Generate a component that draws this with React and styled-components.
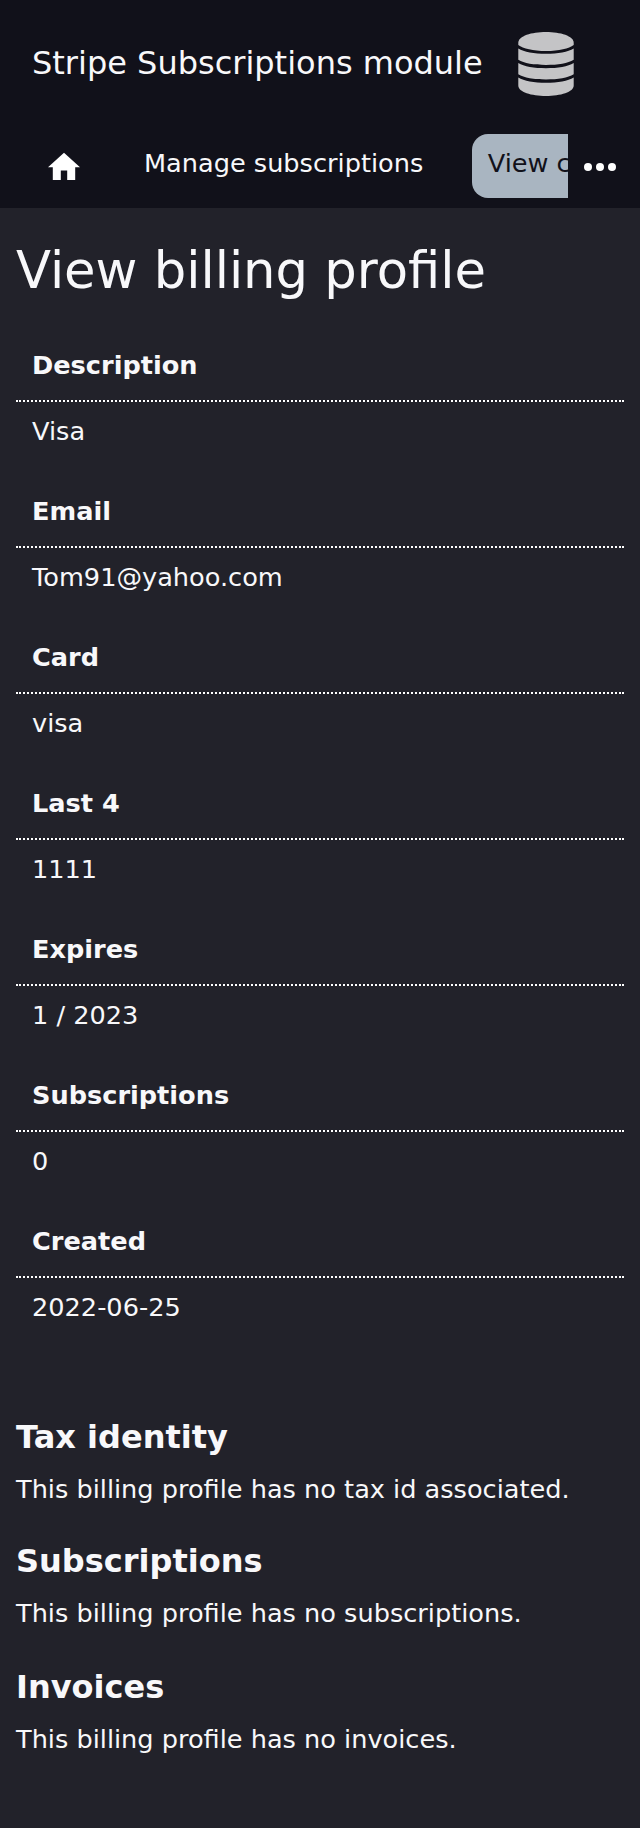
import React from "react";
import styled, { createGlobalStyle } from "styled-components";

const Global = createGlobalStyle`
  * { box-sizing: border-box; }
  body { margin: 0; background: #22222a; color: #f8f8fa; font-family: "DejaVu Sans", sans-serif; font-size: 25.6px; line-height: 36px; }
`;
const Page = styled.div`
  min-height: 1828px;
  background: #22222a;
`;
const Header = styled.header`
  height: 208px;
  background: #11111a;
`;
const Brand = styled.div`
  display: flex;
  align-items: center;
  height: 128px;
  padding-left: 32px;
`;
const BrandName = styled.div`
  width: 486px;
  padding-bottom: 2px;
  font-size: 32px;
  line-height: 48px;
  white-space: nowrap;
`;
const Nav = styled.nav`
  display: flex;
  height: 80px;
`;
const NavScroll = styled.div`
  display: flex;
  gap: 32px;
  width: 568px;
  overflow: hidden;
  padding: 6px 0 10px 32px;
`;
const NavItem = styled.a`
  flex: none;
  height: 64px;
  padding: 0 16px;
  line-height: 58px;
  border-radius: 16px;
  white-space: nowrap;
  margin-left: ${(p) => (p.$active ? "0.5px" : "0")};
  background: ${(p) => (p.$active ? "#a9b5c1" : "transparent")};
  color: ${(p) => (p.$active ? "#11111a" : "#f8f8fa")};
`;
const HomeIcon = styled.svg`
  display: block;
  width: 32px;
  height: 32px;
  margin-top: 14px;
  fill: #fff;
`;
const More = styled.div`
  width: 72px;
  padding: 34px 0 0 16px;
  line-height: 0;
`;
const Main = styled.main`
  padding: 0 16px;
`;
const Title = styled.h1`
  margin: 32px 0 29px;
  font-size: 51.2px;
  line-height: 60px;
  font-weight: 400;
`;
const Field = styled.div`
  height: 146px;
`;
const Label = styled.div`
  height: 73px;
  padding: 18px 16px 0;
  font-weight: 700;
  border-bottom: 2px dotted #fff;
`;
const Value = styled.div`
  padding: 11px 16px;
`;
const Sections = styled.div`
  display: grid;
  grid-template-rows: 124px 126px auto;
  margin-top: 62px;
`;
const SectionTitle = styled.h2`
  margin: 0;
  font-size: 32px;
  line-height: 48px;
`;
const Text = styled.p`
  margin: 10px 0 0;
`;

const fields = [
  ["Description", "Visa"],
  ["Email", "Tom91@yahoo.com"],
  ["Card", "visa"],
  ["Last 4", "1111"],
  ["Expires", "1 / 2023"],
  ["Subscriptions", "0"],
  ["Created", "2022-06-25"],
];
const sections = [
  ["Tax identity", "This billing profile has no tax id associated."],
  ["Subscriptions", "This billing profile has no subscriptions."],
  ["Invoices", "This billing profile has no invoices."],
];

export default function App() {
  return (
    <Page>
      <Global />
      <Header>
        <Brand>
          <BrandName>Stripe Subscriptions module</BrandName>
          <svg width="56" height="64" viewBox="0 0 56 64" fill="#c4c4c6">
            <path d="M28 0C42.5 0 55.7 4 55.7 10.8V13C51 16.6 41 19 28 19S5 16.6 0.3 13V10.8C0.3 4 13.5 0 28 0z" />
            <path d="M0.3 16.5C6 20 16 21.8 28 21.8S50 20 55.7 16.5V27.8C50 31.3 40 33 28 33S6 31.3 0.3 27.8z" />
            <path d="M0.3 31C6 34.5 16 36.2 28 36.2S50 34.5 55.7 31V42.2C50 45.7 40 47.4 28 47.4S6 45.7 0.3 42.2z" />
            <path d="M0.3 45.4C6 48.9 16 50.7 28 50.7S50 48.9 55.7 45.4V53.5C55.7 60 42.5 64 28 64S0.3 60 0.3 53.5z" />
          </svg>
        </Brand>
        <Nav>
          <NavScroll>
            <NavItem>
              <HomeIcon viewBox="2 0 20 20">
                <path d="M10 20v-6h4v6h5v-8h3L12 3 2 12h3v8z" />
              </HomeIcon>
            </NavItem>
            <NavItem>Manage subscriptions</NavItem>
            <NavItem $active>View customer</NavItem>
          </NavScroll>
          <More>
            <svg width="32" height="8" fill="#fff">
              <circle cx="4" cy="4" r="4" />
              <circle cx="16" cy="4" r="4" />
              <circle cx="28" cy="4" r="4" />
            </svg>
          </More>
        </Nav>
      </Header>
      <Main>
        <Title>View billing profile</Title>
        {fields.map(([label, value]) => (
          <Field key={label}>
            <Label>{label}</Label>
            <Value>{value}</Value>
          </Field>
        ))}
        <Sections>
          {sections.map(([title, text]) => (
            <section key={title}>
              <SectionTitle>{title}</SectionTitle>
              <Text>{text}</Text>
            </section>
          ))}
        </Sections>
      </Main>
    </Page>
  );
}
